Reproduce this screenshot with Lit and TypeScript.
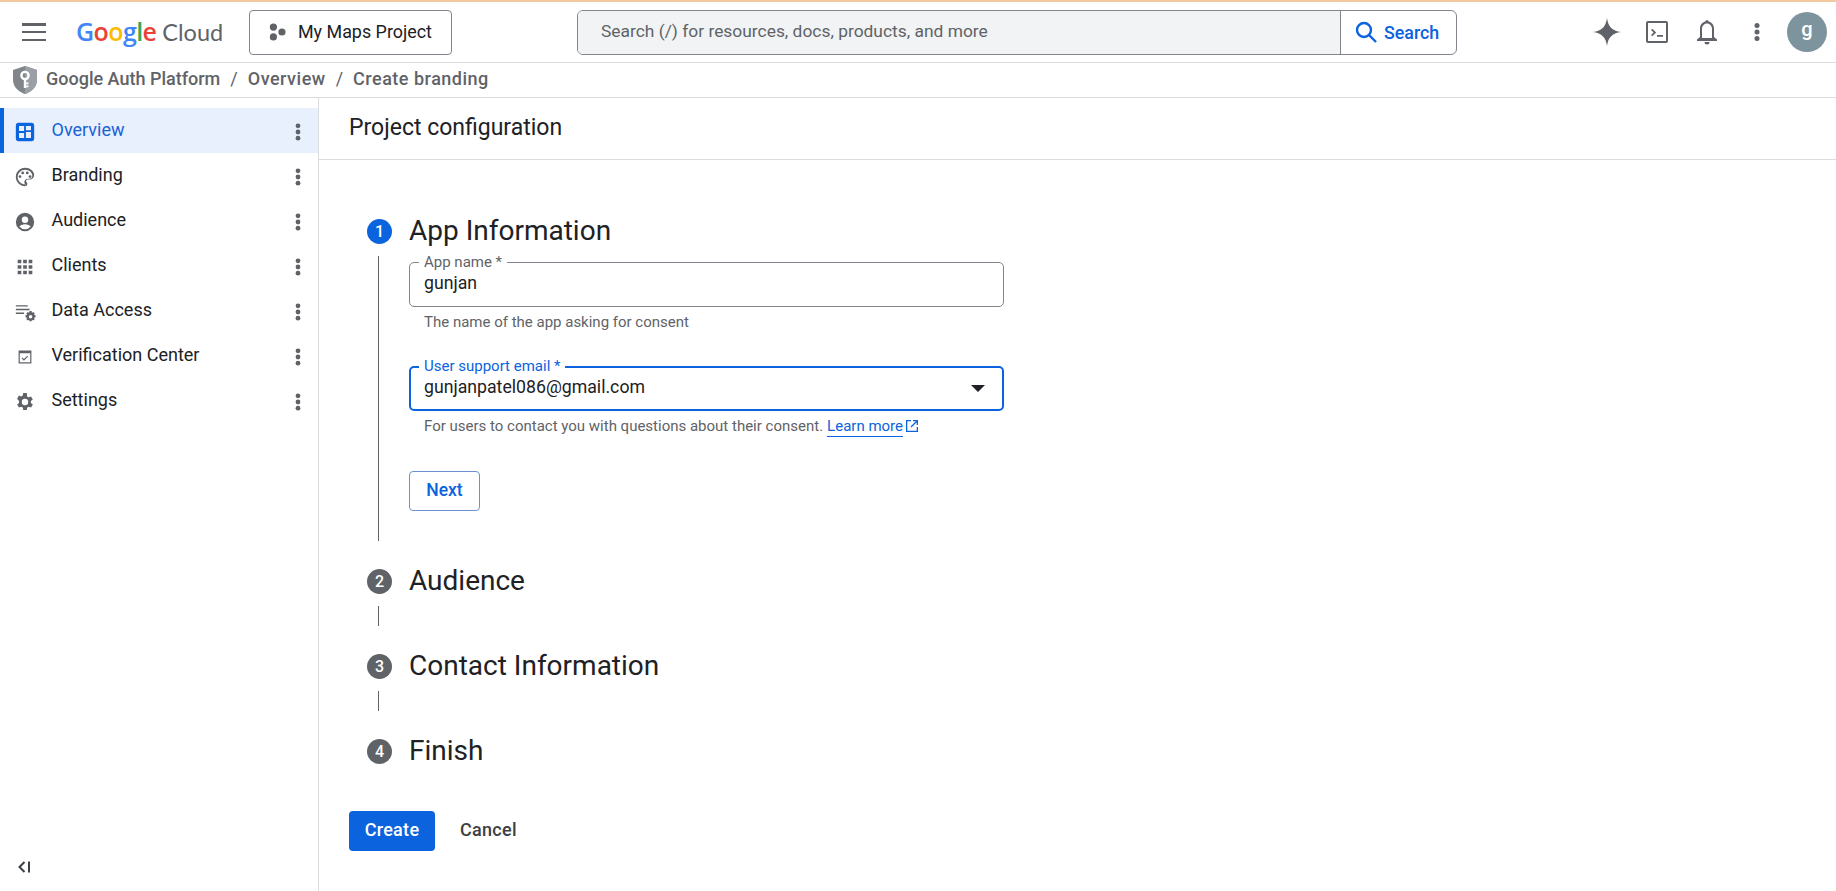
import { LitElement, html, css, svg } from "lit";
import { customElement } from "lit/decorators.js";

const more = html`<svg class="more" width="24" height="24" viewBox="0 0 24 24"><circle cx="12" cy="5.800" r="2.400"/><circle cx="12" cy="12" r="2.400"/><circle cx="12" cy="18.200" r="2.400"/></svg>`;

const navIcons: Record<string, unknown> = {
  Overview: svg`<path fill-rule="evenodd" d="M5 2h14a3 3 0 0 1 3 3v14a3 3 0 0 1-3 3H5a3 3 0 0 1-3-3V5a3 3 0 0 1 3-3zm.500 3.500v5.500h5.500V5.500H5.500zm7.500 0V10h5.500V5.500H13zm0 6.500v6.500h5.500V12H13zm-7.500 1v5.500h5.500V13H5.500z"/>`,
  Branding: svg`<path fill-rule="evenodd" d="M12 2C6.500 2 2 6.500 2 12s4.500 10 10 10c1.400 0 2.500-1.100 2.500-2.500 0-.6-.2-1.200-.7-1.700-.4-.4-.6-.9-.6-1.300 0-1 .8-1.700 1.800-1.700H17c2.800 0 5-2.200 5-5C22 5.900 17.500 2 12 2zm0 18c-4.400 0-8-3.600-8-8s3.600-8 8-8 8 3.100 8 6.700c0 1.800-1.400 3.300-3 3.300h-1.900c-2 0-3.800 1.600-3.800 3.700 0 .9.400 1.800 1 2.600.2.200.2.300.2.400 0 .1-.3.300-.5.300z"/><circle cx="6.500" cy="11.500" r="1.500"/><circle cx="9.500" cy="7.500" r="1.500"/><circle cx="14.500" cy="7.500" r="1.500"/><circle cx="17.500" cy="11.500" r="1.500"/>`,
  Audience: svg`<path fill-rule="evenodd" d="M12 2a10 10 0 1 0 0 20 10 10 0 0 0 0-20zm0 4a3.500 3.500 0 1 1 0 7 3.500 3.500 0 0 1 0-7zm0 14a8 8 0 0 1-6.200-3c.7-1.600 3.600-2.600 6.200-2.600s5.500 1 6.200 2.600A8 8 0 0 1 12 20z"/>`,
  Clients: svg`<path d="M4 4h4v4H4zM10 4h4v4h-4zM16 4h4v4h-4zM4 10h4v4H4zM10 10h4v4h-4zM16 10h4v4h-4zM4 16h4v4H4zM10 16h4v4h-4zM16 16h4v4h-4z"/>`,
  "Data Access": svg`<path d="M2 4.500h13v1.600H2zM2 8.500h15v1.600H2zM2 12.500h9v1.600H2z"/><path fill-rule="evenodd" d="M17 11l2.200 0 .4 1.700 1.500-.7 1.500 1.500-.8 1.500 1.700.6v2.200l-1.700.5.8 1.500-1.500 1.500-1.500-.8-.4 1.700H17l-.5-1.700-1.500.8-1.500-1.500.8-1.500-1.700-.5v-2.200l1.700-.6-.8-1.500 1.500-1.500 1.500.7zm1.100 4.200a1.900 1.900 0 1 0 0 3.800 1.900 1.900 0 0 0 0-3.800z"/>`,
  "Verification Center": svg`<path fill-rule="evenodd" d="M5 5h14v14H5zm1.300 3v9.700h11.400V8z"/><path d="M10.800 16l-2.600-2.600.9-.9 1.700 1.700 3.700-3.700.9.900z"/>`,
  Settings: svg`<path fill-rule="evenodd" d="M19.400 13a7.500 7.500 0 0 0 0-2l2.100-1.600-2-3.500-2.500 1a7.500 7.500 0 0 0-1.700-1L15 2.300h-4l-.4 2.600a7.500 7.500 0 0 0-1.700 1l-2.500-1-2 3.500L6.500 11a7.500 7.500 0 0 0 0 2l-2.100 1.600 2 3.500 2.500-1c.5.400 1.100.7 1.700 1l.4 2.600h4l.4-2.600c.6-.3 1.200-.6 1.700-1l2.500 1 2-3.500L19.400 13zM13 15.500a3.500 3.500 0 1 1 0-7 3.500 3.500 0 0 1 0 7z" transform="translate(-1 0)"/>`,
};

@customElement("app-root")
export class AppRoot extends LitElement {
  static styles = css`
    :host { display: flex; flex-direction: column; height: 891px; width: 1836px; overflow: hidden; background: #fff; font-family: Roboto, "Noto Sans", sans-serif; color: #202124; }
    * { box-sizing: border-box; }
    .top { height: 63px; flex: none; display: flex; align-items: center; border-top: 2px solid #f0c99c; border-bottom: 1px solid #dadce0; padding-left: 22px; }
    .burger { width: 24px; height: 18px; display: flex; flex-direction: column; justify-content: space-between; flex: none; }
    .burger i { display: block; height: 2.500px; background: #5f6368; }
    .logo { margin-left: 30px; width: 148px; flex: none; font-size: 25px; letter-spacing: -0.6px; display: flex; align-items: baseline; font-family: "Open Sans", sans-serif; white-space: nowrap; padding-bottom: 2px; }
    .logo b { font-weight: 600; }
    .logo .cl { color: #5f6368; margin-left: 6px; font-family: Lato, sans-serif; letter-spacing: 0; font-size: 23.500px; }
    .project { margin-left: 25px; width: 203px; height: 45px; border: 1px solid #80868b; border-radius: 4px; display: flex; align-items: center; padding-left: 18px; gap: 12px; font-size: 17.900px; font-weight: 400; color: #202124; flex: none; }
    .project span { padding-bottom: 2px; }
    .search { margin-left: 125px; width: 880px; height: 45px; border: 1px solid #80868b; border-radius: 6px; display: flex; flex: none; overflow: hidden; }
    .search .in { flex: 1; background: #f1f3f4; display: flex; align-items: center; padding-left: 23px; padding-bottom: 2px; font-size: 17.400px; color: #5f6368; border-right: 1px solid #80868b; }
    .search .btn { width: 115px; display: flex; align-items: center; padding-left: 13px; gap: 6px; color: #0b63de; font-size: 17.800px; font-weight: 500; }
    .actions { margin-left: 125px; display: flex; align-items: center; flex: none; }
    .actions svg { fill: #5f6368; display: block; }
    .act { width: 50px; display: flex; align-items: center; justify-content: center; flex: none; }
    .avatar { width: 40px; height: 40px; margin-left: 5px; border-radius: 50%; background: #7d939e; color: #fff; display: flex; align-items: center; justify-content: center; font-size: 20px; font-weight: 500; padding-bottom: 7px; }
    .crumbs { height: 35px; flex: none; display: flex; align-items: center; border-bottom: 1px solid #dadce0; padding-left: 13px; font-size: 18px; font-weight: 500; color: #5f6368; }
    .crumbs svg { margin-right: 9px; flex: none; }
    .crumbs span { padding-bottom: 3px; }
    .crumbs .w { letter-spacing: 0.5px; }
    .crumbs .sep { margin: 0 10px; font-weight: 400; }
    .body { flex: 1; display: flex; min-height: 0; }
    .side { width: 319px; flex: none; border-right: 1px solid #dadce0; padding-top: 10px; display: flex; flex-direction: column; }
    .nav { height: 45px; display: flex; align-items: center; padding-left: 14px; font-size: 18px; font-weight: 400; color: #202124; padding-right: 8px; flex: none; }
    .nav.active { background: #e8f0fe; color: #1a62d6; border-left: 4px solid #0b63de; padding-left: 10px; }
    .nav .ic { fill: #5f6368; width: 22px; height: 22px; margin-right: 15.500px; flex: none; margin-top: 2px; }
    .nav.active .ic { fill: #0b63de; }
    .nav .lb { flex: 1; padding-bottom: 3px; }
    .more { fill: #5f6368; width: 24px; height: 24px; flex: none; margin-top: 3px; }
    .collapse { margin-top: auto; height: 48px; padding-left: 17px; display: flex; align-items: center; }
    .main { flex: 1; display: flex; flex-direction: column; min-width: 0; }
    .mhead { height: 62px; flex: none; border-bottom: 1px solid #dadce0; display: flex; align-items: center; padding-left: 30px; font-size: 23px; padding-bottom: 2px; color: #202124; }
    .content { padding: 54px 0 0 30px; display: flex; flex-direction: column; }
    .step { display: flex; align-items: center; height: 34px; padding-left: 18px; flex: none; }
    .num { width: 25px; height: 25px; border-radius: 50%; background: #5f6368; color: #fff; font-size: 16px; font-weight: 500; display: flex; align-items: center; justify-content: center; flex: none; margin-right: 17px; }
    .num.on { background: #0b63de; }
    .title { font-size: 28px; color: #202124; padding-bottom: 2px; }
    .stem { margin-left: 29px; border-left: 1px solid #5f6368; }
    .stem.short { height: 20px; margin-top: 8px; margin-bottom: 23px; }
    .stem.long { display: block; padding: 6px 0 0 30px; height: 285px; margin-top: 8px; margin-bottom: 23px; }
    .field { position: relative; width: 595px; height: 45px; border: 1px solid #80868b; border-radius: 5px; display: flex; align-items: center; padding: 0 15px 0 14px; font-size: 17.700px; color: #202124; }
    .field.focus { border: 2px solid #0b63de; padding: 0 14px 0 13px; }
    .flabel { position: absolute; left: 9px; top: -9px; background: #fff; padding: 0 5px; font-size: 15px; line-height: 16px; color: #5f6368; }
    .field.focus .flabel { color: #0b63de; left: 8px; top: -10px; }
    .val { flex: 1; padding-bottom: 3px; }
    .caret { width: 0; height: 0; border-left: 7px solid transparent; border-right: 7px solid transparent; border-top: 7px solid #202124; margin-right: 3px; }
    .help { font-size: 15px; color: #5f6368; padding-left: 15px; margin-top: 7px; height: 52px; line-height: 16px; display: flex; align-items: flex-start; }
    .help a { color: #0b63de; border-bottom: 1px solid #0b63de; margin-left: 4px; height: 19px; }
    .help svg { margin-left: 2px; fill: #0b63de; margin-top: 1px; }
    .help.two { height: 42px; }
    .next { width: 71px; height: 40px; border: 1px solid #6d93cf; border-radius: 4px; color: #0b63de; font-size: 17.500px; font-weight: 500; display: flex; align-items: center; justify-content: center; padding-bottom: 2px; margin-top: 11px; }
    .acts { display: flex; align-items: center; margin-top: 43px; }
    .create { width: 86px; height: 40px; background: #0b63de; color: #fff; border-radius: 4px; display: flex; align-items: center; justify-content: center; font-size: 18px; letter-spacing: 0.3px; font-weight: 500; padding-bottom: 3px; }
    .cancel { margin-left: 25px; font-size: 18px; letter-spacing: 0.3px; font-weight: 500; color: #3c4043; padding-bottom: 3px; }
  `;

  render() {
    const items = Object.keys(navIcons);
    return html`
      <div class="top">
        <div class="burger"><i></i><i></i><i></i></div>
        <div class="logo"><b style="color:#4285f4">G</b><b style="color:#ea4335">o</b><b style="color:#fbbc04">o</b><b style="color:#4285f4">g</b><b style="color:#34a853">l</b><b style="color:#ea4335">e</b><span class="cl">Cloud</span></div>
        <div class="project">
          <svg width="18" height="18" viewBox="0 0 20 20" fill="#5f6368"><circle cx="6" cy="4.500" r="4"/><circle cx="6" cy="15.500" r="4"/><circle cx="15.500" cy="10" r="4"/></svg>
          <span>My Maps Project</span>
        </div>
        <div class="search">
          <div class="in">Search (/) for resources, docs, products, and more</div>
          <div class="btn">
            <svg width="24" height="24" viewBox="0 0 24 24" fill="none" stroke="#0b63de" stroke-width="2.400"><circle cx="10" cy="10" r="7"/><path d="M15 15l7 7"/></svg>
            <span>Search</span>
          </div>
        </div>
        <div class="actions">
          <div class="act"><svg width="30" height="30" viewBox="0 0 30 30"><path d="M15 1c1 8 5 13 14 14-9 1-13 6-14 14-1-8-5-13-14-14 9-1 13-6 14-14z"/></svg></div>
          <div class="act"><svg width="24" height="24" viewBox="0 0 24 24"><path fill-rule="evenodd" d="M3 1h18a2 2 0 0 1 2 2v18a2 2 0 0 1-2 2H3a2 2 0 0 1-2-2V3a2 2 0 0 1 2-2zm0 2v18h18V3H3z"/><path d="M6 10l1.200-1.200 4 3.700-4 3.700L6 15l2.600-2.500zM12 15h6v1.800h-6z"/></svg></div>
          <div class="act"><svg width="24" height="26" viewBox="0 0 24 26"><path fill-rule="evenodd" d="M12 1a1.500 1.500 0 0 1 1.500 1.600C17 3.300 19 6.300 19 10v8l3 2.500V22H2v-1.500L5 18v-8c0-3.700 2-6.700 5.500-7.400A1.500 1.500 0 0 1 12 1zm0 3.500C9 4.500 7 7 7 10v9h10v-9c0-3-2-5.500-5-5.500z"/><path d="M9.500 23h5a2.500 2.500 0 0 1-5 0z"/></svg></div>
          <div class="act"><svg width="24" height="24" viewBox="0 0 24 24"><circle cx="12" cy="5.500" r="2.500"/><circle cx="12" cy="12" r="2.500"/><circle cx="12" cy="18.500" r="2.500"/></svg></div>
          <div class="avatar">g</div>
        </div>
      </div>
      <div class="crumbs">
        <svg width="24" height="28" viewBox="0 0 24 28"><path d="M12 0l12 4v10c0 6.500-5 11.500-12 14C5 25.500 0 20.500 0 14V4z" fill="#80868b"/><path d="M12 0l12 4v10c0 6.500-5 11.500-12 14z" fill="#9aa0a6"/><circle cx="12" cy="9.500" r="3.600" fill="none" stroke="#fff" stroke-width="2.400"/><path d="M10.800 13h2.400v9h-2.400zM13 16.500h2.500v1.800H13zM13 19.500h2.500v1.800H13z" fill="#fff"/></svg>
        <span>Google Auth Platform</span><span class="sep">/</span><span class="w">Overview</span><span class="sep">/</span><span class="w">Create branding</span>
      </div>
      <div class="body">
        <div class="side">
          ${items.map(
            (k, i) => html`<div class="nav ${i === 0 ? "active" : ""}">
              <svg class="ic" viewBox="0 0 24 24">${navIcons[k]}</svg><span class="lb">${k}</span>${more}
            </div>`
          )}
          <div class="collapse">
            <svg width="14" height="14" viewBox="0 0 14 14" fill="none" stroke="#3c4043" stroke-width="2"><path d="M7.500 2L2.500 7l5 5"/><path d="M12 1.500v11"/></svg>
          </div>
        </div>
        <div class="main">
          <div class="mhead">Project configuration</div>
          <div class="content">
            <div class="step"><div class="num on">1</div><div class="title">App Information</div></div>
            <div class="stem long">
              <div class="field"><span class="flabel">App name *</span><span class="val">gunjan</span></div>
              <div class="help">The name of the app asking for consent</div>
              <div class="field focus"><span class="flabel">User support email *</span><span class="val">gunjanpatel086@gmail.com</span><span class="caret"></span></div>
              <div class="help two">For users to contact you with questions about their consent.<a>Learn more</a><svg width="14" height="14" viewBox="0 0 14 14"><path d="M1 1h5v1.300H2.300v9.400h9.400V8H13v5H1z"/><path d="M8 1h5v5h-1.300V3.200L6.500 8.400l-.9-.9 5.200-5.200H8z"/></svg></div>
              <div class="next">Next</div>
            </div>
            <div class="step"><div class="num">2</div><div class="title">Audience</div></div>
            <div class="stem short"></div>
            <div class="step"><div class="num">3</div><div class="title">Contact Information</div></div>
            <div class="stem short"></div>
            <div class="step"><div class="num">4</div><div class="title">Finish</div></div>
            <div class="acts"><div class="create">Create</div><div class="cancel">Cancel</div></div>
          </div>
        </div>
      </div>
    `;
  }
}
